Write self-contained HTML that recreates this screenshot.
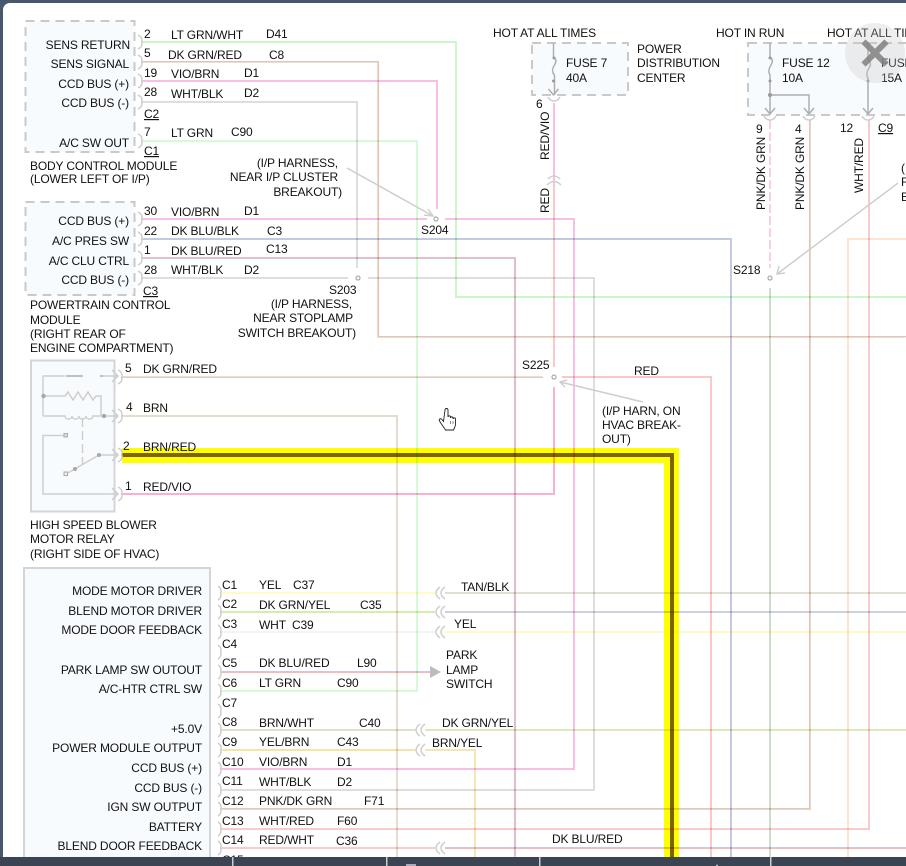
<!DOCTYPE html>
<html><head><meta charset="utf-8"><style>
html,body{margin:0;padding:0;background:#fff}
#p{position:relative;width:906px;height:866px;overflow:hidden;background:#46596b}
#w{position:absolute;left:3px;top:3px;width:903px;height:863px;background:#fff;border-top-left-radius:7px}
svg{position:absolute;left:0;top:0}
text{font-family:"Liberation Sans",Arial,sans-serif;font-size:12px;fill:#111;letter-spacing:-.15px}
.e{text-anchor:end}
.u{text-decoration:underline}
.m path{fill:none;mix-blend-mode:multiply;stroke-width:2}
.m path.n{stroke-width:1.5}
.t path{fill:none;mix-blend-mode:multiply;stroke-width:1.1}
.s{fill:none;stroke:#cecece;stroke-width:1.5}
.f{fill:none;stroke:#aeaeae;stroke-width:1.5}
</style></head><body><div id="p"><div id="w"></div>
<svg width="906" height="866" viewBox="0 0 906 866">
<defs>
<path id="a" d="M138 -7q4 2 4 5q0 2-1 2q1 0 1 2q0 3-4 5" class="s"/>
<path id="b" d="M218 -7q3 2 3 5q0 2-1 2q1 0 1 2q0 3-3 5" class="s"/>
<g id="d"><path d="M440 -6q-4 3-4 6t4 6" class="s"/><path d="M445 -6q-4 3-4 6t4 6" class="s"/></g>
<path id="c" d="M-6 -1q2 4 6 4t6-4" class="s"/>
<path id="v" d="M-5 -6l5 6l5-6" class="f"/>
</defs>

<!-- boxes -->
<rect x="25.5" y="21" width="109" height="131" fill="#f8fbfe" stroke="#c9c9c9" stroke-width="2" stroke-dasharray="9 6"/>
<rect x="25.5" y="202" width="109" height="93" fill="#f8fbfe" stroke="#c9c9c9" stroke-width="2" stroke-dasharray="9 6"/>
<rect x="31" y="360.5" width="83.5" height="151" fill="#f8fbfe" stroke="#d2d6d9" stroke-width="2"/>
<rect x="24" y="568" width="186" height="300" fill="#f8fbfe" stroke="#d2d6d9" stroke-width="2"/>
<rect x="532" y="43" width="96" height="52" fill="#f8fbfe" stroke="#c9c9c9" stroke-width="2" stroke-dasharray="9 6"/>
<rect x="748" y="43" width="170" height="72" fill="#f8fbfe" stroke="#c9c9c9" stroke-width="2" stroke-dasharray="9 6"/>

<!-- highlighted wire -->
<path d="M122 455.5H671.5V866" fill="none" stroke="#ffff00" stroke-width="15"/>
<path d="M122 455H672V866" fill="none" stroke="#7c6300" stroke-width="4"/>

<!-- wires -->
<g class="m">
<path stroke="#c9f7c9" d="M142 42H456V297H906"/>
<path stroke="#f7bfe6" d="M142 81H437V209"/>
<path stroke="#dedede" d="M142 102H357V268"/>
<path class="n" stroke="#c9f7c9" d="M142 141H417V691H221"/>
<path stroke="#f7bfe6" d="M142 219H427M445 219H574V769H221"/>
<path stroke="#c3cadf" d="M142 239H731V857"/>
<path stroke="#dedede" d="M142 278H348M368 278H594V790H221"/>
<path stroke="#e4dccc" d="M121 416H397V857"/>
<path stroke="#f9b0d2" d="M121 494H554V387"/>
<path stroke="#f7bfe6" d="M554 103V180"/>
<path stroke="#fac8c8" d="M554 180V367"/>
<path stroke="#fac8c8" d="M562 377H711V857"/>
<path stroke="#fbd0dd" stroke-dasharray="9 3" d="M770 120V268"/>
<path stroke="#cddccd" d="M770 288V857"/>
<path stroke="#fbcaca" d="M869 120V829H221"/>
<path stroke="#fde4d0" d="M906 239H848V857"/>
<path stroke="#fcfcc4" d="M221 593H435"/>
<path stroke="#e2ded3" d="M445 593H906"/>
<path stroke="#d6ebb0" d="M221 612H435"/>
<path stroke="#ccd1e4" d="M445 612H906"/>
<path stroke="#f4f4f4" d="M221 632H435"/>
<path stroke="#fcfcc4" d="M445 632H906"/>
<path stroke="#e4dccc" d="M221 730H415"/>
<path stroke="#dbeab8" d="M425 730H906"/>
<path stroke="#f2e5a8" d="M221 750H415"/>
<path stroke="#f2e7b6" d="M425 750H475V857"/>
<path stroke="#fbcaca" d="M221 848H435"/>
</g>
<g class="t">
<path stroke="#d8e8cf" transform="translate(-.5,.5)" d="M142 62H378V337H906"/>
<path stroke="#f7baba" transform="translate(.5,-.5)" d="M142 62H378V337H906"/>
<path stroke="#c4cce4" transform="translate(-.5,.5)" d="M142 258H515V857"/>
<path stroke="#f8b8b8" transform="translate(.5,-.5)" d="M142 258H515V857"/>
<path stroke="#d8e8cf" transform="translate(0,-.5)" d="M121 377H543"/>
<path stroke="#f8c0c0" transform="translate(0,.5)" d="M121 377H543"/>
<path stroke="#d0e2c8" transform="translate(.5,.5)" d="M810 120V809H221"/>
<path stroke="#f8bebe" transform="translate(-.5,-.5)" d="M810 120V809H221"/>
<path stroke="#c4cce4" transform="translate(0,-.5)" d="M221 672H430"/>
<path stroke="#f8b8b8" transform="translate(0,.5)" d="M221 672H430"/>
<path stroke="#c4cce4" transform="translate(0,-.5)" d="M445 848H906"/>
<path stroke="#f8b8b8" transform="translate(0,.5)" d="M445 848H906"/>
</g>

<!-- connectors -->
<use href="#a" y="42"/><use href="#a" y="62"/><use href="#a" y="81"/><use href="#a" y="102"/><use href="#a" y="141"/>
<use href="#a" y="219"/><use href="#a" y="239"/><use href="#a" y="258"/><use href="#a" y="278"/>
<use href="#a" x="-20" y="377"/><use href="#a" x="-20" y="416"/><use href="#a" x="-20" y="455"/><use href="#a" x="-20" y="494"/>
<use href="#b" y="593"/><use href="#b" y="612"/><use href="#b" y="632"/><use href="#b" y="652"/><use href="#b" y="672"/><use href="#b" y="691"/><use href="#b" y="711"/><use href="#b" y="730"/><use href="#b" y="750"/><use href="#b" y="769"/><use href="#b" y="790"/><use href="#b" y="809"/><use href="#b" y="829"/><use href="#b" y="848"/>
<use href="#d" y="593"/><use href="#d" y="612"/><use href="#d" y="632"/><use href="#d" y="848"/>
<use href="#d" x="-20" y="730"/><use href="#d" x="-20" y="750"/>
<path d="M430 666L441 672L430 678Z" fill="#bcbcbc"/>

<!-- fuses -->
<path class="f" d="M553.500 43V57c3 2 3 5 1 8s-3 7 0 10v20"/>
<circle cx="554" cy="58" r="1.500" fill="#999"/><circle cx="553.500" cy="81" r="1.500" fill="#999"/>
<use href="#v" x="553.500" y="95"/><use href="#c" x="554" y="98"/>
<path class="s" d="M548 179q6-6 12 0M547 185q7-7 14 0"/>
<path class="f" d="M770 43V57c3 2 3 5 1 8s-3 7-1 10v38M770 95H809V113"/>
<circle cx="770" cy="58" r="1.500" fill="#999"/><circle cx="770" cy="81" r="1.500" fill="#999"/><circle cx="770" cy="95" r="2" fill="#999"/>
<use href="#v" x="770" y="114"/><use href="#v" x="809" y="114"/><use href="#v" x="868" y="114"/>
<path class="f" d="M868 43V60c3 2 3 5 1 8s-3 7-1 10v35"/>
<circle cx="868" cy="81" r="1.500" fill="#999"/>
<use href="#c" x="770" y="117"/><use href="#c" x="809" y="117"/><use href="#c" x="868" y="117"/>

<!-- relay internals -->
<path class="s" d="M43 416V376H65"/>
<path class="f" d="M66 376H83M100 376H103"/>
<path class="s" d="M43 396H65l3-4 5 8 5-8 5 8 5-8 5 8 3-4h5V416M43 416H65c0 4 7 4 7 0c0 4 7 4 7 0c0 4 7 4 7 0c0 4 7 4 7 0h25"/>
<path class="s" d="M103 376h15M112 370l6 6-6 6M112 410l6 6-6 6"/>
<circle cx="43.500" cy="396" r="2.200" fill="#a8a8a8"/><circle cx="104" cy="416" r="2.200" fill="#a8a8a8"/>
<path class="s" d="M82.500 418V465" stroke-dasharray="9 4"/>
<path class="s" d="M66 474L99 455H118M112 449l6 6-6 6M64 435.500H43V494H118M112 488l6 6-6 6"/>
<rect x="64" y="433.500" width="3.500" height="3.500" fill="#ddd" stroke="#aaa"/><rect x="64" y="472" width="3.500" height="3.500" fill="#eee" stroke="#aaa"/>
<circle cx="75" cy="469" r="2" fill="#a8a8a8"/><circle cx="99" cy="455" r="2" fill="#a8a8a8"/>

<!-- splices and leaders -->
<circle cx="436" cy="219" r="2" fill="#fff" stroke="#aaa" stroke-width="1.200"/>
<circle cx="358" cy="278" r="2" fill="#fff" stroke="#aaa" stroke-width="1.200"/>
<circle cx="554" cy="377" r="2" fill="#fff" stroke="#aaa" stroke-width="1.200"/>
<circle cx="770" cy="278" r="2" fill="#fff" stroke="#aaa" stroke-width="1.200"/>
<path class="s" d="M347 168L433 216M424 215l9 1-5-7"/>
<path class="s" d="M643 402L560 382M567 380l-7 2 5 5"/>
<path class="s" d="M898 183L777 274M779 266l-2 8 8-1"/>

<!-- BCM -->
<text class="e" x="130" y="49">SENS RETURN</text><text class="e" x="129" y="68">SENS SIGNAL</text><text class="e" x="129" y="88">CCD BUS (+)</text><text class="e" x="129" y="107">CCD BUS (-)</text><text class="e" x="129" y="147">A/C SW OUT</text>
<text x="144" y="38">2</text><text x="144" y="57">5</text><text x="144" y="77">19</text><text x="144" y="96">28</text><text class="u" x="144" y="118">C2</text><text x="144" y="136">7</text><text class="u" x="144" y="155">C1</text>
<text x="171" y="39">LT GRN/WHT</text><text x="266" y="38">D41</text><text x="168" y="59">DK GRN/RED</text><text x="269" y="59">C8</text><text x="171" y="78">VIO/BRN</text><text x="244" y="77">D1</text><text x="171" y="98">WHT/BLK</text><text x="244" y="97">D2</text><text x="171" y="137">LT GRN</text><text x="231" y="136">C90</text>
<text x="30" y="170">BODY CONTROL MODULE</text><text x="30" y="183">(LOWER LEFT OF I/P)</text>
<text class="e" x="338" y="167">(I/P HARNESS,</text><text class="e" x="338" y="181">NEAR I/P CLUSTER</text><text class="e" x="342" y="196">BREAKOUT)</text>
<text x="421" y="234">S204</text>

<!-- PCM -->
<text class="e" x="129" y="225">CCD BUS (+)</text><text class="e" x="129" y="245">A/C PRES SW</text><text class="e" x="129" y="265">A/C CLU CTRL</text><text class="e" x="129" y="284">CCD BUS (-)</text>
<text x="144" y="215">30</text><text x="144" y="235">22</text><text x="144" y="254">1</text><text x="144" y="274">28</text><text class="u" x="143" y="295">C3</text>
<text x="171" y="216">VIO/BRN</text><text x="244" y="215">D1</text><text x="171" y="235">DK BLU/BLK</text><text x="267" y="235">C3</text><text x="171" y="255">DK BLU/RED</text><text x="266" y="253">C13</text><text x="171" y="274">WHT/BLK</text><text x="244" y="274">D2</text>
<text x="30" y="309">POWERTRAIN CONTROL</text><text x="30" y="324">MODULE</text><text x="30" y="338">(RIGHT REAR OF</text><text x="30" y="352">ENGINE COMPARTMENT)</text>
<text x="329" y="294">S203</text><text class="e" x="352" y="308">(I/P HARNESS,</text><text class="e" x="353" y="322">NEAR STOPLAMP</text><text class="e" x="356" y="337">SWITCH BREAKOUT)</text>

<!-- Relay -->
<text x="125" y="372">5</text><text x="143" y="373">DK GRN/RED</text><text x="126" y="411">4</text><text x="143" y="412">BRN</text><text x="123" y="450">2</text><text x="143" y="451">BRN/RED</text><text x="125" y="490">1</text><text x="143" y="491">RED/VIO</text>
<text x="30" y="529">HIGH SPEED BLOWER</text><text x="30" y="543">MOTOR RELAY</text><text x="30" y="558">(RIGHT SIDE OF HVAC)</text>
<text x="522" y="369">S225</text><text x="634" y="375">RED</text><text x="602" y="415">(I/P HARN, ON</text><text x="602" y="429">HVAC BREAK-</text><text x="602" y="443">OUT)</text>

<!-- Top right -->
<text x="493" y="37">HOT AT ALL TIMES</text><text x="566" y="67">FUSE 7</text><text x="566" y="82">40A</text><text x="637" y="53">POWER</text><text x="637" y="67">DISTRIBUTION</text><text x="637" y="82">CENTER</text><text x="536" y="108">6</text>
<text transform="translate(549,160) rotate(-90)">RED/VIO</text><text transform="translate(549,213) rotate(-90)">RED</text>
<text x="716" y="37">HOT IN RUN</text><text x="827" y="37">HOT AT ALL TIMES</text><text x="782" y="67">FUSE 12</text><text x="782" y="82">10A</text><text x="881" y="67">FUSE 14</text><text x="881" y="82">15A</text>
<text x="756" y="133">9</text><text x="795" y="133">4</text><text x="840" y="132">12</text><text class="u" x="878" y="132">C9</text>
<text transform="translate(765,210) rotate(-90)">PNK/DK GRN</text><text transform="translate(804,210) rotate(-90)">PNK/DK GRN</text><text transform="translate(863,193) rotate(-90)">WHT/RED</text>
<text x="733" y="274">S218</text><text x="901" y="172">(I/P</text><text x="901" y="186">F</text><text x="901" y="201">B</text>

<!-- HVAC -->
<text class="e" x="202" y="595">MODE MOTOR DRIVER</text><text class="e" x="202" y="615">BLEND MOTOR DRIVER</text><text class="e" x="202" y="634">MODE DOOR FEEDBACK</text><text class="e" x="202" y="674">PARK LAMP SW OUTOUT</text><text class="e" x="202" y="693">A/C-HTR CTRL SW</text><text class="e" x="202" y="733">+5.0V</text><text class="e" x="202" y="752">POWER MODULE OUTPUT</text><text class="e" x="202" y="772">CCD BUS (+)</text><text class="e" x="202" y="792">CCD BUS (-)</text><text class="e" x="202" y="811">IGN SW OUTPUT</text><text class="e" x="202" y="831">BATTERY</text><text class="e" x="202" y="850">BLEND DOOR FEEDBACK</text>
<text x="222" y="589">C1</text><text x="222" y="608">C2</text><text x="222" y="628">C3</text><text x="222" y="648">C4</text><text x="222" y="667">C5</text><text x="222" y="687">C6</text><text x="222" y="707">C7</text><text x="222" y="726">C8</text><text x="222" y="746">C9</text><text x="222" y="766">C10</text><text x="222" y="785">C11</text><text x="222" y="805">C12</text><text x="222" y="825">C13</text><text x="222" y="844">C14</text><text x="222" y="864">C15</text>
<text x="259" y="589">YEL</text><text x="259" y="609">DK GRN/YEL</text><text x="259" y="629">WHT</text><text x="259" y="667">DK BLU/RED</text><text x="259" y="687">LT GRN</text><text x="259" y="727">BRN/WHT</text><text x="259" y="746">YEL/BRN</text><text x="259" y="766">VIO/BRN</text><text x="259" y="786">WHT/BLK</text><text x="259" y="805">PNK/DK GRN</text><text x="259" y="825">WHT/RED</text><text x="259" y="844">RED/WHT</text>
<text x="293" y="589">C37</text><text x="360" y="609">C35</text><text x="292" y="629">C39</text><text x="357" y="667">L90</text><text x="337" y="687">C90</text><text x="359" y="727">C40</text><text x="337" y="746">C43</text><text x="337" y="766">D1</text><text x="337" y="786">D2</text><text x="364" y="805">F71</text><text x="337" y="825">F60</text><text x="336" y="845">C36</text>
<text x="461" y="591">TAN/BLK</text><text x="454" y="628">YEL</text><text x="446" y="659">PARK</text><text x="446" y="674">LAMP</text><text x="446" y="688">SWITCH</text><text x="442" y="727">DK GRN/YEL</text><text x="432" y="747">BRN/YEL</text><text x="552" y="843">DK BLU/RED</text>

<!-- cursor -->
<path d="M445 410c0-2 3-2 3 0v7c0-1.500 2.500-1.500 2.500 0v1c0-1.500 2.500-1.500 2.500 0v1c0-1.500 2.500-1.500 2.500 0v5c0 2-1 4-2 6h-8c-1-2-3-4-6-9c-1-2 1-3 2.500-1.500l1.500 2z" fill="#fff" stroke="#222" stroke-width=".9"/>
<path d="M450.500 421v3M453 421v3" stroke="#555" stroke-width=".7"/>

<!-- close overlay -->
<circle cx="875" cy="53" r="30" fill="#c8c8c8" fill-opacity=".3"/>
<path d="M863.500 41.500L886.500 64.500M886.500 41.500L863.500 64.500" stroke="#808080" stroke-opacity=".85" stroke-width="6"/>

<!-- bottom bar -->
<rect x="0" y="857" width="906" height="9" fill="#3b4452"/>
<rect x="232" y="857" width="1.500" height="9" fill="#c9ccd0"/><rect x="386" y="857" width="1.500" height="9" fill="#c9ccd0"/><rect x="539" y="857" width="1.500" height="9" fill="#c9ccd0"/><rect x="770" y="857" width="1.500" height="9" fill="#c9ccd0"/>
<rect x="406" y="864" width="10" height="2" fill="#aab"/><path d="M716 866l1-2 1 2z" fill="#dde"/>
</svg></div></body></html>
